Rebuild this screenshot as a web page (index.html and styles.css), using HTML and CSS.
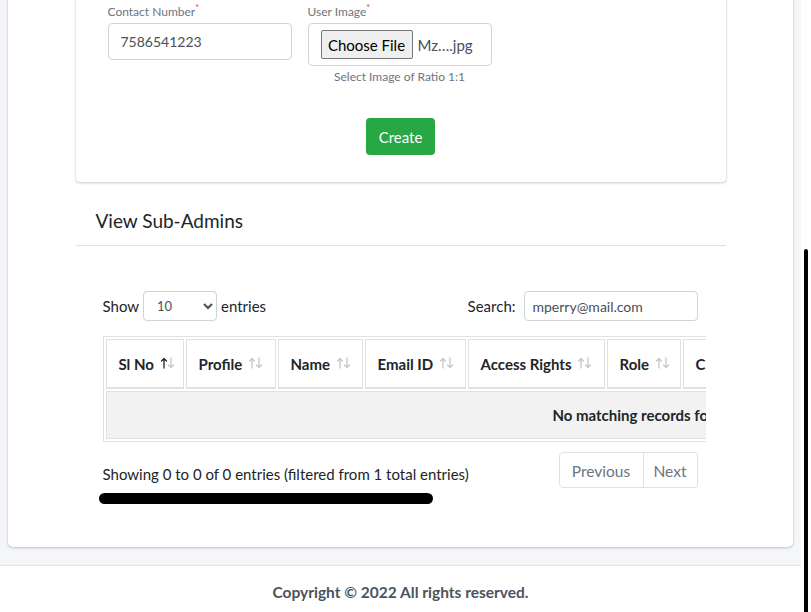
FILE: index.html
```html
<!DOCTYPE html>
<html lang="en">
<head>
<meta charset="utf-8">
<title>Sub-Admins</title>
<link rel="stylesheet" href="styles.css">
</head>
<body>
<div class="viewport">
  <div class="page">
    <div class="content">
      <div class="main-card">
        <div class="inner">
          <div class="form-card">
            <div class="form-row">
              <div class="field">
                <label class="lbl">Contact Number<sup>*</sup></label>
                <input class="input" type="text" value="7586541223">
              </div>
              <div class="field">
                <label class="lbl">User Image<sup>*</sup></label>
                <div class="file-box"><span class="file-btn">Choose File</span><span class="file-name">Mz….jpg</span></div>
                <div class="hint">Select Image of Ratio 1:1</div>
              </div>
            </div>
            <div class="actions"><button class="btn-create" type="button">Create</button></div>
          </div>

          <h3 class="section-title">View Sub-Admins</h3>

          <div class="dt">
            <div class="dt-top">
              <div class="len">
                <span>Show</span>
                <select class="len-select"><option>10</option><option>25</option><option>50</option></select>
                <span>entries</span>
              </div>
              <div class="search">
                <span>Search:</span>
                <input class="search-input" type="text" value="mperry@mail.com">
              </div>
            </div>

            <div class="dt-scroll">
              <table class="grid">
                <thead>
                  <tr>
                    <th class="w-sl">Sl No <svg class="sort" width="16" height="12" viewBox="0 0 16 12"><path d="M4 11V1.5M1.5 4L4 1.5 6.5 4" class="on"/><path d="M11 1v9.5M8.5 8L11 10.5 13.5 8" class="off"/></svg></th>
                    <th class="w-pr">Profile <svg class="sort" width="16" height="12" viewBox="0 0 16 12"><path d="M4 11V1.5M1.5 4L4 1.5 6.5 4" class="off"/><path d="M11 1v9.5M8.5 8L11 10.5 13.5 8" class="off"/></svg></th>
                    <th class="w-nm">Name <svg class="sort" width="16" height="12" viewBox="0 0 16 12"><path d="M4 11V1.5M1.5 4L4 1.5 6.5 4" class="off"/><path d="M11 1v9.5M8.5 8L11 10.5 13.5 8" class="off"/></svg></th>
                    <th class="w-em">Email ID <svg class="sort" width="16" height="12" viewBox="0 0 16 12"><path d="M4 11V1.5M1.5 4L4 1.5 6.5 4" class="off"/><path d="M11 1v9.5M8.5 8L11 10.5 13.5 8" class="off"/></svg></th>
                    <th class="w-ar">Access Rights <svg class="sort" width="16" height="12" viewBox="0 0 16 12"><path d="M4 11V1.5M1.5 4L4 1.5 6.5 4" class="off"/><path d="M11 1v9.5M8.5 8L11 10.5 13.5 8" class="off"/></svg></th>
                    <th class="w-ro">Role <svg class="sort" width="16" height="12" viewBox="0 0 16 12"><path d="M4 11V1.5M1.5 4L4 1.5 6.5 4" class="off"/><path d="M11 1v9.5M8.5 8L11 10.5 13.5 8" class="off"/></svg></th>
                    <th class="w-cr">Created On <svg class="sort" width="16" height="12" viewBox="0 0 16 12"><path d="M4 11V1.5M1.5 4L4 1.5 6.5 4" class="off"/><path d="M11 1v9.5M8.5 8L11 10.5 13.5 8" class="off"/></svg></th>
                    <th class="w-st">Status <svg class="sort" width="16" height="12" viewBox="0 0 16 12"><path d="M4 11V1.5M1.5 4L4 1.5 6.5 4" class="off"/><path d="M11 1v9.5M8.5 8L11 10.5 13.5 8" class="off"/></svg></th>
                    <th class="w-ac">Action</th>
                  </tr>
                </thead>
                <tbody>
                  <tr><td colspan="9" class="empty">No matching records found</td></tr>
                </tbody>
              </table>
            </div>

            <div class="dt-bottom">
              <div class="info-col">
                <div class="info">Showing 0 to 0 of 0 entries (filtered from 1 total entries)</div>
                <div class="hbar"></div>
              </div>
              <div class="pager">
                <span class="page-item">Previous</span>
                <span class="page-item next">Next</span>
              </div>
            </div>
          </div>
        </div>
      </div>
    </div>
    <footer class="footer">
      <div class="copy">Copyright © 2022 All rights reserved.</div>
      <div class="credit">Designed &amp; Developed with care</div>
    </footer>
  </div>
  <div class="scrollbar"><div class="thumb"></div></div>
</div>
</body>
</html>
```
FILE: styles.css
```css
* { box-sizing: border-box; }

body {
  margin: 0;
  background: #f4f6f9;
  font-family: Lato, "Noto Sans", sans-serif;
  font-size: 15px;
  color: #212529;
  overflow: hidden;
}

.viewport {
  display: flex;
  height: 612px;
  overflow: hidden;
}

.page {
  flex: 1;
  min-width: 0;
  display: flex;
  flex-direction: column;
}

.content {
  margin-top: -10px;
  padding: 0 8px 18px;
}

.main-card {
  background: #fff;
  border-radius: 0 0 5px 5px;
  box-shadow: 0 0 1px rgba(0,0,0,.125), 0 1px 3px rgba(0,0,0,.2);
  padding-bottom: 43px;
}

.inner {
  width: 650px;
  margin: 0 auto;
}

.form-card {
  background: #fff;
  border-radius: 4px;
  box-shadow: 0 0 1px rgba(0,0,0,.125), 0 1px 3px rgba(0,0,0,.2);
  padding: 13px 32px 27px;
}

.form-row {
  display: flex;
  gap: 16px;
}

.field {
  width: 184px;
  display: flex;
  flex-direction: column;
}

.lbl {
  font-size: 12px;
  line-height: 18px;
  color: #6c757d;
  margin-bottom: 2px;
}

.lbl sup {
  color: #dc3545;
  font-size: 9px;
  line-height: 1;
  vertical-align: top;
}

.input {
  width: 100%;
  height: 37px;
  border: 1px solid #ced4da;
  border-radius: 4px;
  padding: 0 12px;
  font-family: Lato, "Noto Sans", sans-serif;
  font-size: 14px;
  color: #495057;
}

.file-box {
  height: 43px;
  border: 1px solid #ced4da;
  border-radius: 4px;
  display: flex;
  align-items: center;
  padding: 0 12px;
  gap: 5px;
}

.file-btn {
  flex: none;
  width: 92px;
  height: 29px;
  border: 1px solid #767676;
  border-radius: 2px;
  background: #efefef;
  color: #000;
  font-size: 15px;
  display: flex;
  align-items: center;
  justify-content: center;
}

.file-name {
  font-size: 15px;
  color: #495057;
  white-space: nowrap;
}

.hint {
  margin-top: 3px;
  font-size: 12px;
  line-height: 16px;
  color: #6c757d;
  text-align: center;
}

.actions {
  display: flex;
  justify-content: center;
  margin-top: 33px;
}

.btn-create {
  width: 69px;
  height: 37px;
  border: 0;
  border-radius: 4px;
  background: #28a745;
  color: #fff;
  font-family: Lato, "Noto Sans", sans-serif;
  font-size: 15px;
  padding: 0;
}

.section-title {
  margin: 13px 0 0;
  padding: 12px 20px 10px;
  font-size: 19px;
  font-weight: 400;
  line-height: 28px;
  color: #212529;
  border-bottom: 1px solid #dee2e6;
}

.dt {
  padding: 45px 28px 0 27px;
}

.dt-top {
  display: flex;
  justify-content: space-between;
  align-items: center;
  height: 30px;
}

.len, .search {
  display: flex;
  align-items: center;
  gap: 4px;
}

.search { gap: 8px; }

.len-select {
  width: 74px;
  height: 30px;
  border: 1px solid #ced4da;
  border-radius: 4px;
  background: #fff;
  padding: 0 6px 0 9px;
  font-family: Lato, "Noto Sans", sans-serif;
  font-size: 13px;
  color: #495057;
}

.search-input {
  width: 174px;
  height: 30px;
  border: 1px solid #ced4da;
  border-radius: 4px;
  padding: 0 8px;
  font-family: Lato, "Noto Sans", sans-serif;
  font-size: 14px;
  color: #495057;
}

.dt-scroll {
  margin-top: 15px;
  width: 603px;
  overflow: hidden;
}

.grid {
  width: max-content;
  border: 1px solid #dee2e6;
  border-collapse: separate;
  border-spacing: 2px;
}

.grid th {
  height: 50px;
  border: 1px solid #dee2e6;
  border-bottom-width: 2px;
  padding: 0 6px 0 12px;
  text-align: left;
  font-size: 15px;
  font-weight: 700;
  white-space: nowrap;
}

.sort {
  vertical-align: 1px;
  margin-left: 2px;
}

.sort path {
  fill: none;
  stroke-width: 1.3;
  stroke-linecap: round;
  stroke-linejoin: round;
}

.sort .on { stroke: #212529; }
.sort .off { stroke: #c4c6c9; }

.w-sl { width: 78px; }
.w-pr { width: 90px; }
.w-nm { width: 85px; }
.w-em { width: 101px; }
.w-ar { width: 137px; }
.w-ro { width: 74px; }
.w-cr { width: 180px; }
.w-st { width: 160px; }
.w-ac { width: 154px; }

.grid td.empty {
  height: 48px;
  background: #f2f2f2;
  border: 1px solid #dee2e6;
  text-align: center;
  font-size: 15px;
  font-weight: 700;
  white-space: nowrap;
}

.dt-bottom {
  margin-top: 10px;
  display: flex;
  justify-content: space-between;
  align-items: flex-start;
}

.info {
  padding-top: 10px;
  line-height: 24px;
  font-size: 15px;
}

.hbar {
  width: 334px;
  height: 11px;
  margin: 7px 0 0 -4px;
  border-radius: 6px;
  background: #000;
}

.pager {
  display: flex;
  height: 36px;
  border: 1px solid #dee2e6;
  border-radius: 4px;
}

.page-item {
  display: flex;
  align-items: center;
  justify-content: center;
  width: 83px;
  padding-top: 1px;
  color: #6c757d;
  font-size: 15.5px;
}

.page-item.next {
  width: 54px;
  border-left: 1px solid #dee2e6;
}

.footer {
  flex: 1;
  background: #fff;
  border-top: 1px solid #dee2e6;
  padding-top: 14px;
  text-align: center;
}

.copy {
  font-size: 15.5px;
  line-height: 24px;
  font-weight: 700;
  color: #4b545c;
}

.credit {
  margin-top: 3px;
  font-size: 14px;
  line-height: 20px;
  color: #e83e8c;
}

.scrollbar {
  width: 10px;
  flex: none;
  background: #fff;
}

.thumb {
  width: 4px;
  height: 420px;
  margin: 249px 0 0 3px;
  border-radius: 2px;
  background: #000;
}
```
